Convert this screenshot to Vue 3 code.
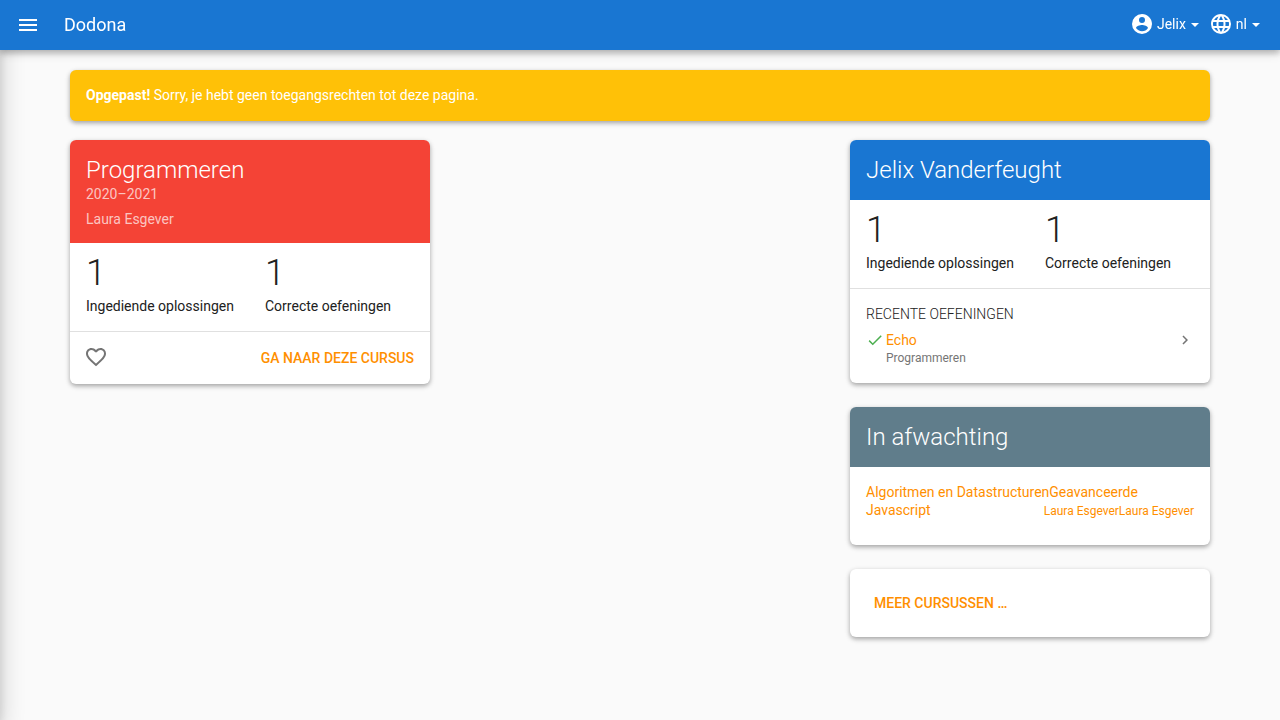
<script setup>
const stats = [
  { value: 1, label: 'Ingediende oplossingen' },
  { value: 1, label: 'Correcte oefeningen' },
]
const pending = [
  { name: 'Algoritmen en Datastructuren', teacher: 'Laura Esgever' },
  { name: 'Geavanceerde Javascript', teacher: 'Laura Esgever' },
]
</script>

<template>
  <div class="page">
    <header class="navbar">
      <button class="menu" type="button" aria-label="Menu">
        <svg width="24" height="24" viewBox="0 0 24 24"><path d="M3 6h18v2H3V6m0 5h18v2H3v-2m0 5h18v2H3v-2z" /></svg>
      </button>
      <a class="brand" href="#">Dodona</a>
      <nav class="actions">
        <button class="dropdown" type="button">
          <svg width="24" height="24" viewBox="0 0 24 24"><path d="M12 19.2c-2.5 0-4.71-1.28-6-3.2.03-2 4-3.1 6-3.1s5.97 1.1 6 3.1a7.232 7.232 0 0 1-6 3.2M12 5a3 3 0 0 1 3 3 3 3 0 0 1-3 3 3 3 0 0 1-3-3 3 3 0 0 1 3-3m0-3A10 10 0 0 0 2 12a10 10 0 0 0 10 10 10 10 0 0 0 10-10c0-5.53-4.5-10-10-10z" /></svg>
          <span>Jelix</span><i class="caret"></i>
        </button>
        <button class="dropdown" type="button">
          <svg width="24" height="24" viewBox="0 0 24 24"><path d="M16.36 14c.08-.66.14-1.32.14-2 0-.68-.06-1.34-.14-2h3.38c.16.64.26 1.31.26 2s-.1 1.36-.26 2m-5.15 5.56c.6-1.11 1.06-2.31 1.38-3.56h2.95a8.03 8.03 0 0 1-4.33 3.56M14.34 14H9.66c-.1-.66-.16-1.32-.16-2 0-.68.06-1.35.16-2h4.68c.09.65.16 1.32.16 2 0 .68-.07 1.34-.16 2M12 19.96c-.83-1.2-1.5-2.53-1.91-3.96h3.82c-.41 1.43-1.08 2.76-1.91 3.96M8 8H5.08A7.923 7.923 0 0 1 9.4 4.44C8.8 5.55 8.35 6.75 8 8m-2.92 8H8c.35 1.25.8 2.45 1.4 3.56A8.008 8.008 0 0 1 5.08 16m-.82-2C4.1 13.36 4 12.69 4 12s.1-1.36.26-2h3.38c-.08.66-.14 1.32-.14 2 0 .68.06 1.34.14 2M12 4.03c.83 1.2 1.5 2.54 1.91 3.97h-3.82c.41-1.43 1.08-2.77 1.91-3.97M18.92 8h-2.95a15.65 15.65 0 0 0-1.38-3.56c1.84.63 3.37 1.9 4.33 3.56M12 2C6.47 2 2 6.5 2 12a10 10 0 0 0 10 10 10 10 0 0 0 10-10A10 10 0 0 0 12 2z" /></svg>
          <span>nl</span><i class="caret"></i>
        </button>
      </nav>
    </header>
    <aside class="drawer" aria-hidden="true"></aside>

    <main class="container">
      <div class="alert" role="alert"><strong>Opgepast!</strong> Sorry, je hebt geen toegangsrechten tot deze pagina.</div>

      <div class="columns">
        <section class="card">
          <div class="title red">
            <h2>Programmeren</h2>
            <p class="year">2020–2021</p>
            <p class="teacher">Laura Esgever</p>
          </div>
          <div class="stats">
            <div v-for="s in stats" :key="s.label">
              <div class="value">{{ s.value }}</div>
              <div class="label">{{ s.label }}</div>
            </div>
          </div>
          <div class="card-actions">
            <button class="heart" type="button" aria-label="Favoriet">
              <svg width="24" height="24" viewBox="0 0 24 24"><path d="M12.1 18.55l-.1.1-.11-.1C7.14 14.24 4 11.39 4 8.5 4 6.5 5.5 5 7.5 5c1.54 0 3.04 1 3.57 2.36h1.86C13.46 6 14.96 5 16.5 5c2 0 3.5 1.5 3.5 3.5 0 2.89-3.14 5.74-7.9 10.05M16.5 3c-1.74 0-3.41.81-4.5 2.08C10.91 3.81 9.24 3 7.5 3 4.42 3 2 5.41 2 8.5c0 3.77 3.4 6.86 8.55 11.53L12 21.35l1.45-1.32C18.6 15.36 22 12.27 22 8.5 22 5.41 19.58 3 16.5 3z" /></svg>
            </button>
            <a class="text-button" href="#">GA NAAR DEZE CURSUS</a>
          </div>
        </section>

        <div class="side">
          <section class="card">
            <div class="title blue"><h2>Jelix Vanderfeught</h2></div>
            <div class="stats">
              <div v-for="s in stats" :key="s.label">
                <div class="value">{{ s.value }}</div>
                <div class="label">{{ s.label }}</div>
              </div>
            </div>
            <div class="recent">
              <h3>RECENTE OEFENINGEN</h3>
              <div class="exercise">
                <svg class="check" width="18" height="18" viewBox="0 0 24 24"><path d="M21 7L9 19l-5.5-5.5 1.41-1.41L9 16.17 19.59 5.59 21 7z" /></svg>
                <div class="info">
                  <a href="#">Echo</a>
                  <small>Programmeren</small>
                </div>
                <svg class="chevron" width="18" height="18" viewBox="0 0 24 24"><path d="M8.59 16.58L13.17 12 8.59 7.41 10 6l6 6-6 6-1.41-1.42z" /></svg>
              </div>
            </div>
          </section>

          <section class="card">
            <div class="title grey"><h2>In afwachting</h2></div>
            <div class="pending">
              <a v-for="p in pending" :key="p.name" href="#">{{ p.name }}</a>
              <span class="teachers"><a v-for="p in pending" :key="p.name" href="#">{{ p.teacher }}</a></span>
            </div>
          </section>

          <section class="card more">
            <a class="text-button" href="#">MEER CURSUSSEN …</a>
          </section>
        </div>
      </div>
    </main>
  </div>
</template>

<style>
body {
  margin: 0;
  background: #fafafa;
}
</style>

<style scoped>
.page {
  min-height: 100vh;
  box-sizing: border-box;
  font: 14px/18px Roboto, sans-serif;
  color: #212121;
  overflow-x: hidden;
}
h2, h3, p {
  margin: 0;
}
svg {
  display: block;
  fill: currentColor;
  flex: none;
}
a {
  color: #ff8f00;
  text-decoration: none;
}
button {
  padding: 0;
  border: 0;
  background: none;
  font: inherit;
  color: inherit;
  cursor: pointer;
}
.navbar {
  position: relative;
  z-index: 1;
  display: flex;
  align-items: center;
  height: 50px;
  padding: 0 20px 0 16px;
  box-sizing: border-box;
  background: #1976d2;
  color: #fff;
  box-shadow: 0 3px 6px rgba(0, 0, 0, 0.2), 0 3px 10px rgba(0, 0, 0, 0.16);
}
.brand {
  margin-left: 24px;
  font-size: 18px;
  color: #fff;
}
.actions {
  display: flex;
  gap: 10px;
  margin-left: auto;
  padding-bottom: 2px;
}
.dropdown {
  display: flex;
  align-items: center;
  gap: 3px;
}
.caret {
  margin: 2px 0 0 2px;
  border: 4px solid transparent;
  border-top-color: #fff;
  border-bottom: 0;
}
.drawer {
  position: fixed;
  top: 0;
  bottom: 0;
  left: -280px;
  width: 280px;
  box-shadow: 0 10px 24px rgba(0, 0, 0, 0.2), 0 6px 10px rgba(0, 0, 0, 0.1);
}
.container {
  max-width: 1140px;
  margin: 0 auto;
  padding: 20px 16px;
}
.alert {
  margin-bottom: 19px;
  padding: 16px 16px 17px;
  background: #ffc107;
  color: #fff;
}
.alert,
.card {
  border-radius: 6px;
  box-shadow: 0 2px 4px rgba(0, 0, 0, 0.26), 0 2px 6px rgba(0, 0, 0, 0.12);
}
.columns {
  display: grid;
  grid-template-columns: repeat(3, 1fr);
  gap: 30px;
  align-items: start;
}
.side {
  grid-column: 3;
  display: grid;
  gap: 24px;
}
.card {
  background: #fff;
  overflow: hidden;
}
.title {
  padding: 16px;
  color: #fff;
}
.title h2 {
  font-size: 24px;
  line-height: 28px;
  font-weight: 300;
}
.title p {
  color: rgba(255, 255, 255, 0.7);
}
.title .year {
  margin-top: 1px;
}
.title .teacher {
  margin-top: 7px;
}
.title.red {
  padding-bottom: 15px;
}
.red {
  background: #f44336;
}
.blue {
  background: #1976d2;
}
.grey {
  background: #607d8b;
}
.stats {
  display: grid;
  grid-template-columns: 1fr 1fr;
  gap: 30px;
  padding: 8px 16px 16px;
  border-bottom: 1px solid #e0e0e0;
}
.value {
  font-size: 36px;
  line-height: 44px;
  font-weight: 300;
}
.label {
  margin-top: 2px;
  white-space: nowrap;
}
.card-actions {
  display: flex;
  align-items: center;
  justify-content: space-between;
  padding: 13px 16px;
}
.heart {
  margin-left: -2px;
  padding-bottom: 2px;
  color: #757575;
}
.text-button {
  font-weight: 500;
}
.recent {
  padding: 16px;
}
.recent h3 {
  font-size: 14px;
  line-height: 18px;
  font-weight: 300;
}
.exercise {
  display: flex;
  align-items: flex-start;
  margin-top: 8px;
}
.info {
  display: grid;
  flex: 1;
  padding-left: 2px;
}
.info small {
  font-size: 12px;
  line-height: 18px;
  color: #757575;
}
.check {
  color: #4caf50;
}
.chevron {
  color: #757575;
}
.pending {
  padding: 16px 16px 26px;
}
.teachers {
  float: right;
  font-size: 12px;
  line-height: 20px;
}
.more {
  padding: 25px 24px;
}
</style>
